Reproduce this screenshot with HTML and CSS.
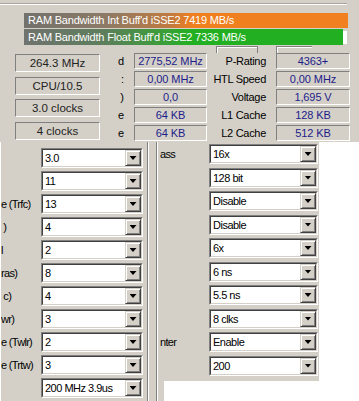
FILE: index.html
```html
<!DOCTYPE html>
<html>
<head>
    <title>Memory Settings</title>
    <link rel="stylesheet" href="styles.css">
</head>
<body>
    <div class="top">
        <div class="groove"></div>
        <div class="bars">
            <div class="bar barInt">RAM Bandwidth Int Buff'd iSSE2 7419 MB/s</div>
            <div class="barRow">
                <div class="bar barFloat">RAM Bandwidth Float Buff'd iSSE2 7336 MB/s</div>
                <div class="barRest"></div>
            </div>
        </div>
        <div class="tabs">
            <div class="tab tabA"></div>
            <div class="tab tabB"></div>
        </div>
        <div class="info">
            <div class="clocks">
                <div class="box">264.3 MHz</div>
                <div class="box">CPU/10.5</div>
                <div class="box">3.0 clocks</div>
                <div class="box">4 clocks</div>
            </div>
            <div class="specs">
                <div class="tail">d</div>
                <div class="box value">2775,52 MHz</div>
                <div class="label">P-Rating</div>
                <div class="box value">4363+</div>

                <div class="tail">:</div>
                <div class="box value">0,00 MHz</div>
                <div class="label">HTL Speed</div>
                <div class="box value">0,00 MHz</div>

                <div class="tail">)</div>
                <div class="box value">0,0</div>
                <div class="label">Voltage</div>
                <div class="box value">1,695 V</div>

                <div class="tail">e</div>
                <div class="box value">64 KB</div>
                <div class="label">L1 Cache</div>
                <div class="box value">128 KB</div>

                <div class="tail">e</div>
                <div class="box value">64 KB</div>
                <div class="label">L2 Cache</div>
                <div class="box value">512 KB</div>
            </div>
        </div>
    </div>

    <div class="bottom">
        <div class="timings">
            <div class="row"><div class="name"></div><div class="combo"><div class="inner"><span class="val">3.0</span><span class="btn"></span></div></div></div>
            <div class="row"><div class="name"></div><div class="combo"><div class="inner"><span class="val">11</span><span class="btn"></span></div></div></div>
            <div class="row"><div class="name">e (Trfc)</div><div class="combo"><div class="inner"><span class="val">13</span><span class="btn"></span></div></div></div>
            <div class="row"><div class="name">&nbsp;)</div><div class="combo"><div class="inner"><span class="val">4</span><span class="btn"></span></div></div></div>
            <div class="row"><div class="name">l</div><div class="combo"><div class="inner"><span class="val">2</span><span class="btn"></span></div></div></div>
            <div class="row"><div class="name">ras)</div><div class="combo"><div class="inner"><span class="val">8</span><span class="btn"></span></div></div></div>
            <div class="row"><div class="name">&nbsp;c)</div><div class="combo"><div class="inner"><span class="val">4</span><span class="btn"></span></div></div></div>
            <div class="row"><div class="name">wr)</div><div class="combo"><div class="inner"><span class="val">3</span><span class="btn"></span></div></div></div>
            <div class="row"><div class="name">e (Twlr)</div><div class="combo"><div class="inner"><span class="val">2</span><span class="btn"></span></div></div></div>
            <div class="row"><div class="name">e (Trtw)</div><div class="combo"><div class="inner"><span class="val">3</span><span class="btn"></span></div></div></div>
            <div class="row"><div class="name"></div><div class="combo"><div class="inner"><span class="val">200 MHz 3.9us</span><span class="btn"></span></div></div></div>
        </div>

        <div class="features">
            <div class="featInner">
                <div class="featRows">
                    <div class="row"><div class="name">ass</div><div class="combo wide"><div class="inner"><span class="val">16x</span><span class="btn"></span></div></div></div>
                    <div class="row"><div class="name"></div><div class="combo wide"><div class="inner"><span class="val">128 bit</span><span class="btn"></span></div></div></div>
                    <div class="row"><div class="name"></div><div class="combo wide"><div class="inner"><span class="val">Disable</span><span class="btn"></span></div></div></div>
                    <div class="row"><div class="name"></div><div class="combo wide"><div class="inner"><span class="val">Disable</span><span class="btn"></span></div></div></div>
                    <div class="row"><div class="name"></div><div class="combo wide"><div class="inner"><span class="val">6x</span><span class="btn"></span></div></div></div>
                    <div class="row"><div class="name"></div><div class="combo wide"><div class="inner"><span class="val">6 ns</span><span class="btn"></span></div></div></div>
                    <div class="row"><div class="name"></div><div class="combo wide"><div class="inner"><span class="val">5.5 ns</span><span class="btn"></span></div></div></div>
                    <div class="row"><div class="name"></div><div class="combo wide"><div class="inner"><span class="val">8 clks</span><span class="btn"></span></div></div></div>
                    <div class="row"><div class="name">nter</div><div class="combo wide"><div class="inner"><span class="val">Enable</span><span class="btn"></span></div></div></div>
                    <div class="row"><div class="name"></div><div class="combo wide"><div class="inner"><span class="val">200</span><span class="btn"></span></div></div></div>
                </div>
                <div class="blank"></div>
            </div>
        </div>

        <div class="void"></div>
    </div>
</body>
</html>
```

FILE: styles.css
```css
body {
    margin: 0;
    width: 359px;
    height: 401px;
    overflow: hidden;
    background-color: #d4d0c8;
    font-family: 'Liberation Sans', Arial, sans-serif;
    font-size: 11px;
    color: #000;
}

/* upper window: benchmark bars + cpu info */
.top {
    height: 142px;
    overflow: hidden;
}
.groove {
    margin-top: 3px;
    width: 347px;
    height: 0;
    border-top: 1px solid #a8a49c;
    border-bottom: 1px solid #fff;
}
.bars {
    margin: 8px 0 0 24px;
    width: 324px;
}
.bar {
    height: 15px;
    line-height: 15px;
    padding-left: 4px;
    color: #fff;
    letter-spacing: -0.2px;
    white-space: nowrap;
    overflow: hidden;
}
.barInt {
    background: linear-gradient(to right, #72716c 0%, #8c7a66 25%, #c07a40 45%, #f07f1e 52%, #f08020 100%);
}
.barRow {
    display: flex;
    margin-top: 1px;
    height: 16px;
}
.barFloat {
    flex: 1;
    height: 16px;
    line-height: 16px;
    background: linear-gradient(to right, #70736e 0%, #5d7e5c 25%, #38a036 45%, #22b022 52%, #22b022 100%);
}
.barRest {
    width: 4px;
    margin: 2px 1px 1px 0;
    background-color: #fff;
}
.tabs {
    position: relative;
    height: 7px;
}
.tab {
    position: absolute;
    top: 1px;
    height: 6px;
    border: 1px solid #808080;
    border-bottom: none;
    box-shadow: inset 1px 1px #fff;
}
.tabA {
    left: 216px;
    width: 40px;
}
.tabB {
    left: 276px;
    width: 35px;
    border-right: none;
}

.info {
    display: flex;
}
.box {
    box-sizing: border-box;
    border: 1px solid;
    border-color: #808080 #fff #fff #808080;
    text-align: center;
    white-space: nowrap;
    overflow: hidden;
}
.clocks {
    margin: 2px 0 0 15px;
    width: 85px;
    display: flex;
    flex-direction: column;
    gap: 4.5px;
}
.clocks .box {
    height: 18px;
    line-height: 16px;
    font-size: 11.5px;
    color: #222;
}
.specs {
    display: grid;
    grid-template-columns: 34px 73px 69px 74px;
    grid-auto-rows: 18px;
    align-items: center;
}
.tail {
    text-align: right;
    padding-right: 10px;
}
.specs .value {
    height: 16px;
    line-height: 14px;
    color: #1c1c8a;
    letter-spacing: -0.1px;
}
.label {
    text-align: right;
    padding-right: 10px;
    letter-spacing: -0.3px;
    white-space: nowrap;
}

/* lower window: timing and feature combos */
.bottom {
    display: flex;
    height: 259px;
}
.timings {
    box-sizing: border-box;
    width: 148px;
    padding-top: 6px;
    border-left: 1px solid #fff;
    border-right: 1px solid #808080;
    display: flex;
    flex-direction: column;
    gap: 3px;
}
.row {
    display: flex;
    height: 20px;
    align-items: center;
    flex-shrink: 0;
}
.name {
    width: 40px;
    overflow: hidden;
    white-space: nowrap;
    letter-spacing: -0.7px;
}
.combo {
    box-sizing: border-box;
    width: 102px;
    height: 20px;
    border: 1px solid;
    border-color: #808080 #fff #fff #808080;
}
.combo.wide {
    width: 109px;
}
.inner {
    display: flex;
    height: 100%;
    box-sizing: border-box;
    border: 1px solid;
    border-color: #404040 #d4d0c8 #d4d0c8 #404040;
    background-color: #fff;
}
.val {
    flex: 1;
    padding-left: 2px;
    line-height: 16px;
    letter-spacing: -0.5px;
    white-space: nowrap;
    overflow: hidden;
}
.btn {
    box-sizing: border-box;
    width: 16px;
    height: 16px;
    border: 1px solid;
    border-color: #d4d0c8 #404040 #404040 #d4d0c8;
    box-shadow: inset 1px 1px #fff, inset -1px -1px #808080;
    background-color: #d4d0c8;
    display: flex;
    align-items: center;
    justify-content: center;
}
.btn::after {
    content: '';
    width: 7px;
    height: 4px;
    background-color: #000;
    clip-path: polygon(0 0, 100% 0, 50% 100%);
}

.features {
    box-sizing: border-box;
    width: 171px;
    padding-left: 7px;
    border-left: 1px solid #fff;
}
.featInner {
    height: 100%;
    display: flex;
    flex-direction: column;
    border-left: 1px solid #808080;
    box-shadow: inset 1px 0 #fff;
}
.featRows {
    box-sizing: border-box;
    height: 239px;
    padding: 2px 0 0 1px;
    display: flex;
    flex-direction: column;
    gap: 3.5px;
}
.featRows .name {
    width: 51px;
    padding-left: 2px;
    box-sizing: border-box;
}
.blank {
    flex: 1;
    margin-left: 7px;
    background-color: #fff;
}
.void {
    flex: 1;
    background-color: #fff;
}
```
